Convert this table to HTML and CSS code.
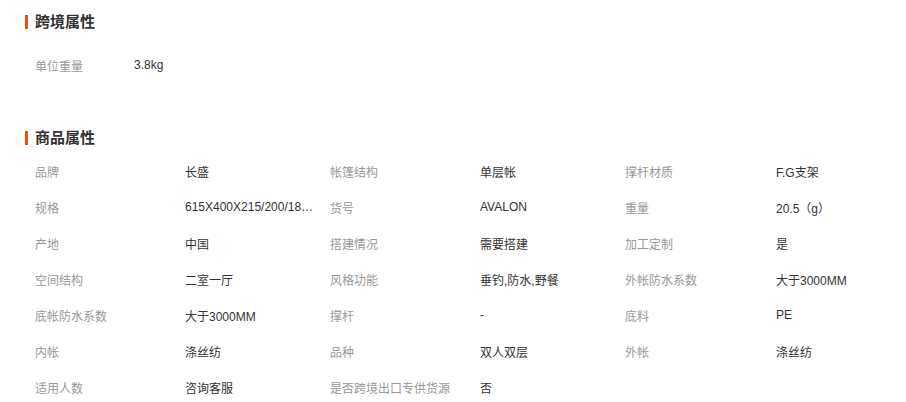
FILE: index.html
```html
<!DOCTYPE html>
<html lang="zh-CN">
<head>
    <meta charset="UTF-8">
    <meta name="viewport" content="width=device-width, initial-scale=1.0">
    <title>商品属性</title>
    <link rel="stylesheet" href="styles.css">
</head>
<body>
    <div class="attr-block first">
        <h3 class="attr-title">跨境属性</h3>
        <div class="kv-row">
            <span class="kv-label">单位重量</span>
            <span class="kv-value">3.8kg</span>
        </div>
    </div>

    <div class="attr-block second">
        <h3 class="attr-title">商品属性</h3>
        <div class="attr-grid">
            <span class="label">品牌</span><span class="value">长盛</span>
            <span class="label">帐篷结构</span><span class="value">单层帐</span>
            <span class="label">撑杆材质</span><span class="value">F.G支架</span>

            <span class="label">规格</span><span class="value">615X400X215/200/180CM</span>
            <span class="label">货号</span><span class="value">AVALON</span>
            <span class="label">重量</span><span class="value">20.5（g）</span>

            <span class="label">产地</span><span class="value">中国</span>
            <span class="label">搭建情况</span><span class="value">需要搭建</span>
            <span class="label">加工定制</span><span class="value">是</span>

            <span class="label">空间结构</span><span class="value">二室一厅</span>
            <span class="label">风格功能</span><span class="value">垂钓,防水,野餐</span>
            <span class="label">外帐防水系数</span><span class="value">大于3000MM</span>

            <span class="label">底帐防水系数</span><span class="value">大于3000MM</span>
            <span class="label">撑杆</span><span class="value">-</span>
            <span class="label">底料</span><span class="value">PE</span>

            <span class="label">内帐</span><span class="value">涤丝纺</span>
            <span class="label">品种</span><span class="value">双人双层</span>
            <span class="label">外帐</span><span class="value">涤丝纺</span>

            <span class="label">适用人数</span><span class="value">咨询客服</span>
            <span class="label">是否跨境出口专供货源</span><span class="value">否</span>
        </div>
    </div>
</body>
</html>
```

FILE: styles.css
```css
body {
    margin: 0;
    padding: 12px 0 0 25px;
    font-family: Tahoma, "Liberation Sans", "Noto Sans CJK SC", sans-serif;
    font-size: 12px;
    color: #333;
    background: #fff;
}
.attr-block.second {
    margin-top: 45px;
}
.attr-title {
    display: flex;
    align-items: center;
    gap: 7px;
    margin: 0;
    height: 20px;
    line-height: 20px;
    font-size: 15px;
    font-weight: bold;
    color: #333;
}
.attr-title::before {
    content: "";
    width: 3px;
    height: 14px;
    background: #ff4a00;
}
.kv-row {
    display: flex;
    align-items: center;
    height: 36px;
    margin-top: 15px;
    padding-left: 10px;
}
.kv-label {
    width: 99px;
    color: #999;
}
.attr-grid {
    display: grid;
    grid-template-columns: 150px 145px 150px 145px 151px 1fr;
    grid-auto-rows: 36px;
    align-items: center;
    margin-top: 5px;
    padding-left: 10px;
}
.label {
    color: #999;
    white-space: nowrap;
}
.value {
    color: #333;
    padding-right: 12px;
    white-space: nowrap;
    overflow: hidden;
    text-overflow: ellipsis;
}
```
